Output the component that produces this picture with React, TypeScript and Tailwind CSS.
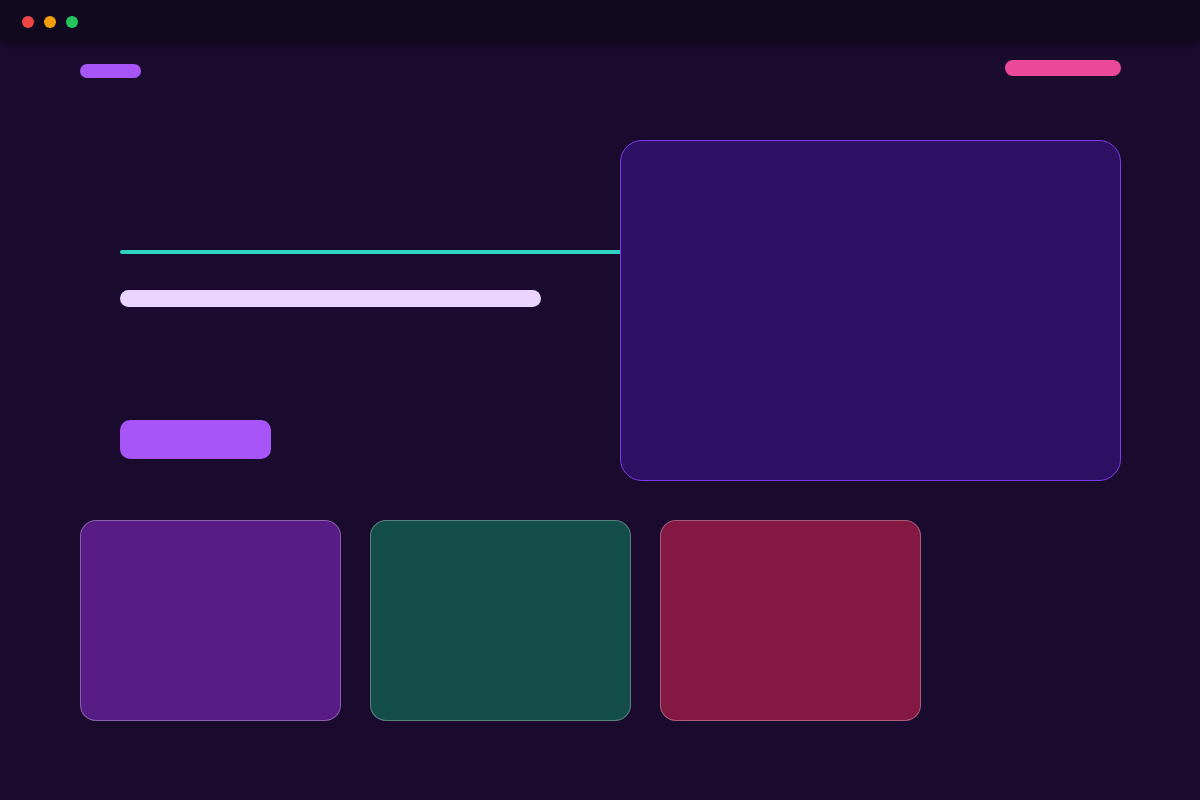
import React from 'react';

const tiles = [
  { id: 'violet', bg: 'bg-[#581c87]' },
  { id: 'teal', bg: 'bg-[#134e4a]' },
  { id: 'pink', bg: 'bg-[#831843]' },
];

export default function App() {
  return (
    <div className="w-[1200px] h-[800px] bg-[#1a0b2e] overflow-hidden font-['Liberation_Sans',sans-serif]">
      {/* window chrome */}
      <div className="h-[44px] bg-[#110a1f] rounded-b-xl shadow-[0_2px_8px_rgba(0,0,0,0.35)] flex items-center gap-[10px] pl-[22px]">
        <span className="w-3 h-3 rounded-full bg-[#ef4444]" />
        <span className="w-3 h-3 rounded-full bg-[#f59e0b]" />
        <span className="w-3 h-3 rounded-full bg-[#22c55e]" />
      </div>

      <div className="pl-[80px] pr-[79px]">
        {/* top nav */}
        <div className="flex justify-between items-start pt-4 h-[32px]">
          <div className="mt-1 w-[61px] h-[14px] rounded-full bg-[#a855f7]" />
          <div className="w-[116px] h-4 rounded-full bg-[#ec4899]" />
        </div>

        {/* hero */}
        <div className="flex mt-16">
          <div className="w-[540px] shrink-0 pl-10 flex flex-col">
            <div className="mt-[110px] h-1 w-[500px] rounded-l-full bg-[#2dd4bf]" />
            <div className="mt-9 h-[17px] w-[421px] rounded-full bg-[#e9d5ff]" />
            <div className="mt-[113px] h-[39px] w-[151px] rounded-[10px] bg-[#a855f7]" />
          </div>
          <div className="w-[501px] h-[341px] shrink-0 rounded-[22px] bg-[#2e1065] border border-[#7c3aed]" />
        </div>

        {/* tiles */}
        <div className="flex gap-[29px] mt-[39px]">
          {tiles.map((t) => (
            <div
              key={t.id}
              className={`w-[261px] h-[201px] rounded-2xl border border-white/30 ${t.bg}`}
            />
          ))}
        </div>
      </div>
    </div>
  );
}
